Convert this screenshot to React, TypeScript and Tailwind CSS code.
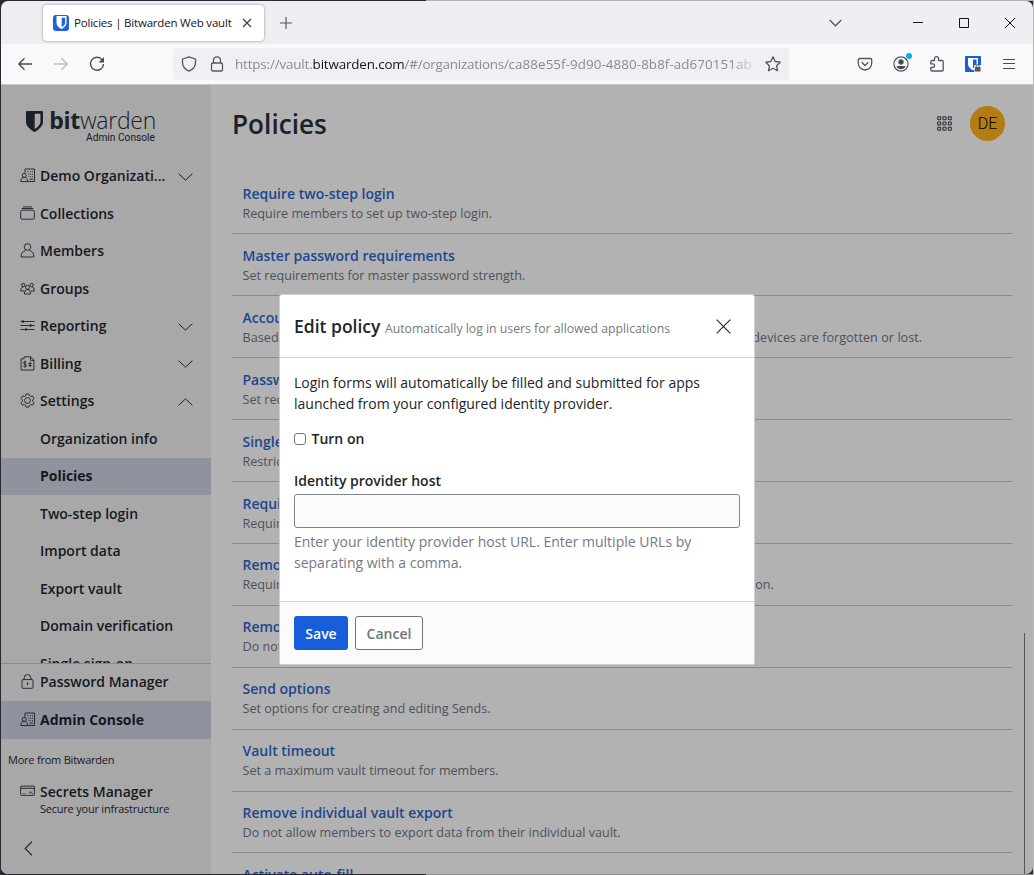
import type { ReactNode } from "react";
import { clsx } from "clsx";

type IconName =
  | "business"
  | "collection"
  | "user"
  | "users"
  | "sliders"
  | "billing"
  | "cog"
  | "lock"
  | "secrets";

interface NavItem {
  label: string;
  icon?: IconName;
  chevron?: "up" | "down";
  active?: boolean;
}

const NAV_ITEMS: NavItem[] = [
  { label: "Demo Organizati...", icon: "business", chevron: "down" },
  { label: "Collections", icon: "collection" },
  { label: "Members", icon: "user" },
  { label: "Groups", icon: "users" },
  { label: "Reporting", icon: "sliders", chevron: "down" },
  { label: "Billing", icon: "billing", chevron: "down" },
  { label: "Settings", icon: "cog", chevron: "up" },
  { label: "Organization info" },
  { label: "Policies", active: true },
  { label: "Two-step login" },
  { label: "Import data" },
  { label: "Export vault" },
  { label: "Domain verification" },
  { label: "Single sign-on" },
];

const POLICIES = [
  { name: "Require two-step login", description: "Require members to set up two-step login." },
  { name: "Master password requirements", description: "Set requirements for master password strength." },
  {
    name: "Account recovery administration",
    description:
      "Based on the encryption method, recover accounts when master password or trusted devices are forgotten or lost.",
    wide: true,
  },
  { name: "Password generator", description: "Set requirements for password generator." },
  { name: "Single organization", description: "Restrict members from joining other organizations." },
  { name: "Require single sign-on authentication", description: "Require members to log in with single sign-on." },
  {
    name: "Remove individual vault",
    description: "Require members to save items to an organization by removing the individual vault option.",
  },
  { name: "Remove Send", description: "Do not allow members to create or edit Sends." },
  { name: "Send options", description: "Set options for creating and editing Sends." },
  { name: "Vault timeout", description: "Set a maximum vault timeout for members." },
  {
    name: "Remove individual vault export",
    description: "Do not allow members to export data from their individual vault.",
  },
  { name: "Activate auto-fill", description: "Activate the auto-fill on page load setting." },
];

const ICONS: Record<IconName, ReactNode> = {
  business: (
    <>
      <path d="M5 5V1h9.5v12.5H8M7.3 3.7h1.2M10 3.7h1.2M12 3.7h1M8 6.2h1M10 6.2h1.2M12 6.2h1M8.5 8.7h.8M10.2 8.7h1M12 8.7h1M9.5 11.2h3.5" />
      <circle cx="4.2" cy="7.4" r="2" />
      <path d="M.8 13.6c0-2.7 1-4.1 3.4-4.1s3.4 1.4 3.4 4.1z" />
    </>
  ),
  collection: (
    <>
      <rect x=".7" y="4.2" width="13.6" height="9" rx="1.2" />
      <path d="M1.8 2.5h11.4M2.8.9h9.4" />
    </>
  ),
  user: (
    <>
      <circle cx="7.5" cy="4" r="3.3" />
      <path d="M1.2 14c-.3-3 1.2-5.8 4.3-6.5M13.8 14c.3-3-1.2-5.8-4.3-6.5M1.2 14h12.6" />
    </>
  ),
  users: (
    <>
      <circle cx="3.3" cy="4" r="1.7" />
      <circle cx="11.7" cy="4" r="1.7" />
      <circle cx="7.5" cy="6.4" r="2" />
      <path d="M4.4 10H.7c0-2.6.8-4 2.5-4M10.6 10h3.7c0-2.6-.8-4-2.5-4M4.5 13c0-3 1-4.4 3-4.4s3 1.4 3 4.4z" />
    </>
  ),
  sliders: (
    <>
      <path d="M.5 3.5h14M.5 7.5h14M.5 11.5h14" />
      <path d="M3 2.2v2.6M10.6 6.2v2.6M6 10.2v2.6" strokeWidth="1.5" />
    </>
  ),
  billing: (
    <>
      <path d="M4 2.8H1.1V14h12.8V4.2L10.700.8H4v2M10.5 1v3.4H14" />
      <path d="M6.3 6.1C5.4 5.3 3.5 5.5 3.5 6.8c0 1.6 3 1 3 2.7 0 1.4-2.1 1.5-3.1.6M5 4.7v7M8.5 7.4h3.200M8.5 9.5h3.200M10 6v5" />
    </>
  ),
  cog: (
    <>
      <path d="M6 1h3l.5 1.9 1.1.6 1.9-.6L14 5.5 12.7 7v1.2L14 9.6l-1.5 2.6-1.9-.6-1.1.6L9 14.1H6l-.5-1.9-1.1-.6-1.9.6L1 9.6l1.4-1.4V7L1 5.5l1.5-2.6 1.9.6 1.1-.6z" strokeLinejoin="round" />
      <circle cx="7.5" cy="7.5" r="2.9" />
    </>
  ),
  lock: (
    <>
      <rect x="2" y="5.6" width="11" height="8.7" rx="1" />
      <path d="M4.1 5.6V4a3.4 3.4 0 0 1 6.8 0v1.6M7.5 9v2.2" />
      <circle cx="7.5" cy="9.1" r=".5" />
    </>
  ),
  secrets: (
    <>
      <rect x=".6" y="2.1" width="13.8" height="9.3" rx=".8" />
      <path d="M.6 4.3h13.8M2.5 9.7h1M4.5 9.7h1M9.5 9.4l1-1.8 1.2 1.8M12 9.7h1" />
    </>
  ),
};

function NavIcon({ name }: { name: IconName }) {
  return (
    <svg className="h-[15px] w-[15px] shrink-0" viewBox="0 0 15 15" fill="none" stroke="#1b2029" strokeWidth=".9">
      {ICONS[name]}
    </svg>
  );
}

function Chevron({ up }: { up?: boolean }) {
  return (
    <svg
      className={clsx("mt-[2px] h-[8px] w-[15px] shrink-0", up && "rotate-180")}
      viewBox="0 0 15 8"
      fill="none"
      stroke="#1b2029"
      strokeWidth="1"
    >
      <path d="M.6.7 7.5 7.1 14.4.7" />
    </svg>
  );
}

function NavRow({ item }: { item: NavItem }) {
  return (
    <div
      className={clsx(
        "flex h-[37.5px] shrink-0 items-center pr-[18px] pb-px pl-[19px] text-[14px] text-[#15191f]",
        item.active ? "bg-[#8f939e] font-bold" : "font-semibold",
      )}
    >
      <span className="mr-[5px] flex w-[15px]">{item.icon && <NavIcon name={item.icon} />}</span>
      <span className={clsx("flex-1 whitespace-nowrap", item.active && "tracking-[-0.03px]")}>{item.label}</span>
      {item.chevron && <Chevron up={item.chevron === "up"} />}
    </div>
  );
}

function Shield({ className, fill, inner }: { className: string; fill: string; inner: string }) {
  return (
    <svg className={className} viewBox="0 0 17 21">
      <path d="M1.2 0h14.6c.7 0 1.2.5 1.2 1.2v9.6c0 4.6-4.6 8.2-8.5 10.2C4.6 19 0 15.4 0 10.8V1.2C0 .5.5 0 1.2 0z" fill={fill} />
      <path d="M8.7 2.7h5.7v8.1c0 3-2.9 5.4-5.7 7.1z" fill={inner} />
    </svg>
  );
}

function TabStrip() {
  return (
    <div className="flex h-[43px] items-center bg-[#efeef3] pl-[42px]">
      <div className="flex h-[36px] w-[221px] items-center rounded bg-white pl-[10px] shadow-[0_0_3px_rgba(0,0,0,0.4)]">
        <div className="flex h-4 w-4 items-center justify-center rounded-[3px] bg-[#2361d8]">
          <svg className="h-[13px] w-[11px]" viewBox="0 0 11 13">
            <path d="M.5 0h10v7c0 2.7-2.6 4.7-5 6C3.1 11.7.5 9.7.5 7z" fill="#fff" />
            <path d="M5.7 1.7h3.4V7c0 1.6-1.5 3-3.4 4.1z" fill="#2361d8" />
          </svg>
        </div>
        <span className="ml-[5px] w-[162px] text-[11.5px] tracking-[-0.2px] whitespace-nowrap text-[#15141a]">
          Policies | Bitwarden Web vault
        </span>
        <svg className="ml-[6px] h-[10px] w-[10px]" viewBox="0 0 10 10" stroke="#3a3a44" strokeWidth="1.1">
          <path d="M1 1l8 8M9 1 1 9" />
        </svg>
      </div>
      <svg className="ml-[15.5px] h-[12px] w-[12px]" viewBox="0 0 12 12" stroke="#55555f" strokeWidth="1.2">
        <path d="M6 0v12M0 6h12" />
      </svg>
      <div className="flex flex-1 items-center justify-end pr-[18px]">
        <svg className="h-[8px] w-[13px]" viewBox="0 0 13 8" fill="none" stroke="#55555f" strokeWidth="1.3">
          <path d="M.7 1l5.8 5.8L12.3 1" />
        </svg>
        <svg className="ml-[71.5px] h-[10px] w-[10px]" viewBox="0 0 10 10" stroke="#111">
          <path d="M0 4.5h10" />
        </svg>
        <svg className="ml-[36px] h-[10px] w-[10px]" viewBox="0 0 10 10" fill="none" stroke="#111">
          <path d="M.5.5h9v9h-9z" />
        </svg>
        <svg className="ml-[36px] h-[10px] w-[10px]" viewBox="0 0 10 10" stroke="#111">
          <path d="M0 0l10 10M10 0 0 10" />
        </svg>
      </div>
    </div>
  );
}

function AddressBar() {
  return (
    <div className="flex h-[32px] w-[616px] items-center rounded bg-[#f0f0f4] pl-[8px]">
      <svg className="h-4 w-4 shrink-0" viewBox="0 0 16 16" fill="none" stroke="#55555f" strokeWidth="1.3">
        <path d="M8 .8 14.5 3v3.5c0 4-2.5 7-6.5 8.7C4 13.5 1.5 10.5 1.5 6.5V3z" strokeLinejoin="round" />
      </svg>
      <svg className="ml-[12px] h-4 w-4 shrink-0" viewBox="0 0 16 16" fill="none" stroke="#55555f" strokeWidth="1.3">
        <rect x="2.5" y="7" width="11" height="8" rx="1.2" />
        <path d="M4.5 7V4.3a3.5 3.5 0 0 1 7 0V7" />
      </svg>
      <div className="ml-[10px] w-[522px] overflow-hidden mask-r-from-95% pt-px text-[13.4px] tracking-[-0.15px] whitespace-nowrap text-[#8a8992]">
        https://vault.<span className="text-[#15141a]">bitwarden.com</span>
        <span className="tracking-[-0.22px]">/#/organizations/</span>
        <span className="tracking-[0.07px]">ca88e55f-9d90-4880-8b8f-ad670151ab</span>
      </div>
      <svg className="ml-[8px] h-4 w-4 shrink-0" viewBox="0 0 16 16" fill="none" stroke="#55555f" strokeWidth="1.3">
        <path d="M8 .9l2.2 4.6 5 .7-3.6 3.5.9 5L8 12.3l-4.5 2.4.9-5L.8 6.2l5-.7z" strokeLinejoin="round" />
      </svg>
    </div>
  );
}

function Toolbar() {
  return (
    <div className="flex h-[41px] items-center border-b border-[#c9c9cc] bg-[#f9f9fb] pl-[16px]">
      <svg className="h-4 w-4" viewBox="0 0 16 16" fill="none" stroke="#4a4a54" strokeWidth="1.4">
        <path d="M15 8H2M7.5 2.3 1.8 8l5.7 5.7" />
      </svg>
      <svg className="ml-[20px] h-4 w-4" viewBox="0 0 16 16" fill="none" stroke="#bfbfc5" strokeWidth="1.4">
        <path d="M1 8h13M8.5 2.3 14.2 8l-5.7 5.7" />
      </svg>
      <svg className="ml-[20px] h-4 w-4" viewBox="0 0 16 16" fill="none" stroke="#4a4a54" strokeWidth="1.4">
        <path d="M13.2 3.8A6.5 6.5 0 1 0 14.5 8" />
        <path d="M15 1v5.5H9.5z" fill="#4a4a54" stroke="none" />
      </svg>
      <div className="ml-[68px]">
        <AddressBar />
      </div>
      <div className="flex flex-1 items-center justify-end gap-[20px] pr-[16px]">
        <svg className="h-4 w-4" viewBox="0 0 16 16" fill="none" stroke="#55555f" strokeWidth="1.3">
          <path d="M2.5 2.5h11c.7 0 1.2.5 1.2 1.2v3.6a6.7 6.7 0 0 1-13.4 0V3.7c0-.7.5-1.2 1.2-1.2z" />
          <path d="M4.7 6.3 8 9.5l3.3-3.2" />
        </svg>
        <div className="relative">
          <svg className="h-4 w-4" viewBox="0 0 16 16" fill="none" stroke="#55555f" strokeWidth="1.2">
            <circle cx="8" cy="8" r="7.1" />
            <circle cx="8" cy="6" r="2.7" fill="#4a4a54" stroke="none" />
            <path d="M3.5 10h9c-.5 2.2-2.5 3.3-4.5 3.3S4 12.2 3.5 10z" fill="#4a4a54" stroke="none" />
          </svg>
          <span className="absolute -top-[3px] -right-[3px] h-[6px] w-[6px] rounded-full bg-[#0fa9ec]" />
        </div>
        <svg className="h-4 w-4" viewBox="0 0 16 16" fill="none" stroke="#55555f" strokeWidth="1.3">
          <path
            d="M5.500 4.500V2.700a2 2 0 0 1 4 0v1.800h3.500c.7 0 1.200.5 1.200 1.200v8.100c0 .7-.5 1.200-1.200 1.200H3c-.7 0-1.200-.5-1.200-1.200v-2.300h2a1.800 1.800 0 0 0 0-3.600h-2V5.700c0-.7.5-1.200 1.200-1.200z"
            strokeLinejoin="round"
          />
        </svg>
        <svg className="h-4 w-4" viewBox="0 0 16 16">
          <rect width="16" height="16" rx="1" fill="#175ddc" />
          <path d="M3 2h10v6c0 3-2.6 5-5 6.3C5.6 13 3 11 3 8z" fill="#fff" />
          <path d="M8 3.5h3.6V8c0 1.6-1.6 3-3.6 4.3z" fill="#175ddc" />
          <path d="M9.3 9H16v7H9.3z" fill="#f9f9fb" />
          <path d="M10 11h5.5v4.5H10z" fill="#55555f" />
          <path d="M11.2 11v-.8a1.5 1.5 0 0 1 3 0v.8" fill="none" stroke="#55555f" />
        </svg>
        <svg className="h-4 w-4" viewBox="0 0 16 16" stroke="#4a4a54" strokeWidth="1.2">
          <path d="M2 3.5h12M2 7.5h12M2 12.5h12" />
        </svg>
      </div>
    </div>
  );
}

function Sidebar() {
  return (
    <aside className="flex w-[210px] shrink-0 flex-col bg-[#a8a8a8] text-[#15191f]">
      <div className="flex h-[72.5px] shrink-0 items-start pt-[26px] pl-[25px]">
        <Shield className="h-[21px] w-[17px]" fill="#1b2029" inner="#a8a8a8" />
        <div className="-mt-[7px] flex w-[113px] flex-col items-end">
          <span className="text-[23px] leading-[32px] tracking-[-0.28px] text-[#1b2029]">
            <b className="font-bold">bit</b>
            <span className="font-light">warden</span>
          </span>
          <span className="-mt-[4.5px] mr-px font-[Roboto,sans-serif] text-[10.2px] leading-[12px]">Admin Console</span>
        </div>
      </div>
      <nav className="flex h-[505.5px] shrink-0 flex-col overflow-hidden">
        {NAV_ITEMS.map((item) => (
          <NavRow key={item.label} item={item} />
        ))}
      </nav>
      <div className="border-t border-[#8b8b8b]">
        <div className="-mt-[0.5px]">
          <NavRow item={{ label: "Password Manager", icon: "lock" }} />
          <NavRow item={{ label: "Admin Console", icon: "business", active: true }} />
        </div>
      </div>
      <p className="mt-[12.5px] pl-[7px] text-[11px] leading-[18px] tracking-[-0.22px]">More from Bitwarden</p>
      <div className="mt-[14px] flex pl-[19px]">
        <span className="mt-[1px] mr-[5px]">
          <NavIcon name="secrets" />
        </span>
        <div>
          <p className="text-[14px] leading-[18px] font-semibold">Secrets Manager</p>
          <p className="text-[11px] leading-[16px] tracking-[-0.22px]">Secure your infrastructure</p>
        </div>
      </div>
      <svg className="mt-[24px] ml-[23px] h-[15px] w-[9px]" viewBox="0 0 9 15" fill="none" stroke="#1b2029" strokeWidth="1.1">
        <path d="M8 .7 1.2 7.5 8 14.3" />
      </svg>
    </aside>
  );
}

function PageHeader() {
  return (
    <header className="flex h-[77px] items-center justify-between pr-[7px]">
      <h1 className="text-[26.2px] leading-[36px] font-semibold text-[#1b2029]">Policies</h1>
      <div className="flex items-center gap-[18px]">
        <svg className="h-[15px] w-[15px]" viewBox="0 0 15 15" fill="none" stroke="#2b313b" strokeWidth="1.1">
          {[0.7, 6, 11.3].map((y) =>
            [0.7, 6, 11.3].map((x) => <rect key={`${x}-${y}`} x={x} y={y} width="3" height="3" rx=".5" />),
          )}
        </svg>
        <div className="flex h-[35px] w-[35px] items-center justify-center rounded-full bg-[#b47d12] font-[Roboto,sans-serif] text-[16px] font-light text-black">
          DE
        </div>
      </div>
    </header>
  );
}

function PolicyList() {
  return (
    <div className="mt-[10.15px]">
      {POLICIES.map((policy) => (
        <div key={policy.name} className="h-[61.95px] border-b border-[#8b8b8b] pt-[11.7px] pl-[10.5px]">
          <p className="text-[14px] leading-[20px] font-semibold text-[#1c4690]">{policy.name}</p>
          <p
            className={clsx(
              "text-[12.6px] leading-[19px] whitespace-nowrap text-[#4d5159]",
              policy.wide && "tracking-[0.06px]",
            )}
          >
            {policy.description}
          </p>
        </div>
      ))}
    </div>
  );
}

function EditPolicyDialog() {
  return (
    <div className="flex h-[371px] w-[476px] flex-col overflow-hidden rounded-[3px] border border-[#d0d0d2] bg-white text-[14px] text-[#212529]">
      <div className="flex h-[63px] items-center justify-between border-b border-[#ced0d3] pr-[23px] pl-[14px]">
        <h2 className="mt-[2px] text-[17.5px] leading-[26px] font-semibold">
          Edit policy{" "}
          <small className="text-[12.25px] font-normal text-[#737a85]">
            Automatically log in users for allowed applications
          </small>
        </h2>
        <svg className="mt-px h-[15px] w-[15px]" viewBox="0 0 15 15" stroke="#212529" strokeWidth="1.1">
          <path d="M.7.7l13.6 13.6M14.3.7.7 14.3" />
        </svg>
      </div>
      <div className="flex-1 px-[14px] pt-[14px]">
        <p className="w-[430px] leading-[21px]">
          Login forms will automatically be filled and submitted for apps launched from your configured identity
          provider.
        </p>
        <label className="mt-[14px] flex items-center leading-[21px] font-semibold">
          <span className="mr-[5.5px] h-[12px] w-[12px] rounded-[3px] border border-[#6f7480] bg-white" />
          Turn on
        </label>
        <label className="mt-[21px] block leading-[21px] font-semibold">Identity provider host</label>
        <div className="mt-[3px] h-[34px] rounded-[3px] border border-[#80858f] bg-[#fbfbfb]" />
        <p className="mt-[3px] w-[420px] leading-[21px] text-[#737a85]">
          Enter your identity provider host URL. Enter multiple URLs by separating with a comma.
        </p>
      </div>
      <div className="flex h-[63px] items-center gap-[7px] border-t border-[#ced0d3] bg-[#fbfbfb] px-[14px]">
        <button className="h-[34px] w-[54px] rounded-[3px] bg-[#175ddc] font-semibold text-white">Save</button>
        <button className="h-[34px] w-[68px] rounded-[3px] border border-[#6c757d] bg-white font-semibold text-[#6c757d]">
          Cancel
        </button>
      </div>
    </div>
  );
}

export default function App() {
  return (
    <div className="h-[875px] w-[1034px] overflow-hidden bg-[#2b2630] pt-px pl-px font-['Open_Sans','Noto_Sans',sans-serif]">
      <div className="relative flex h-[873px] w-[1032px] flex-col overflow-hidden rounded-[7px]">
        <TabStrip />
        <Toolbar />
        <div className="flex min-h-0 flex-1 bg-[#b2b2b2]">
          <Sidebar />
          <main className="flex min-w-0 flex-1 overflow-hidden pl-[21px]">
            <div className="w-[780px]">
              <PageHeader />
              <PolicyList />
            </div>
            <div className="mt-[548px] ml-[12px] w-px bg-[#555]" />
          </main>
        </div>
        <div className="absolute top-[293px] left-[278px]">
          <EditPolicyDialog />
        </div>
      </div>
      {/* desktop showing along the window edges */}
      <div className="absolute top-0 left-[426px] h-px w-[608px] bg-[#b3b2b6]" />
      <div className="absolute top-[874px] left-[426px] h-px w-[608px] bg-[#8e8e90]" />
      <div className="absolute top-0 left-[1033px] h-[875px] w-px bg-[#b8b8ba]" />
    </div>
  );
}
